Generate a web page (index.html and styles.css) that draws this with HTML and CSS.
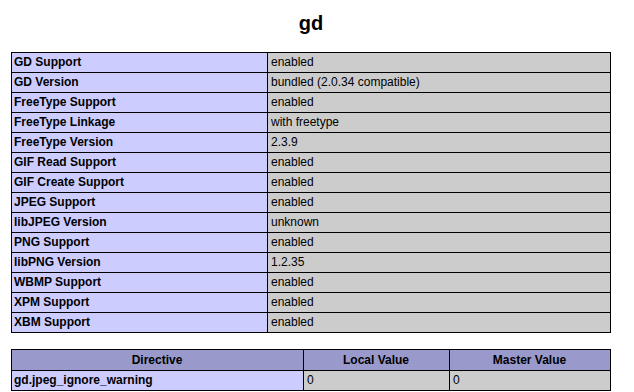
FILE: index.html
```html
<!DOCTYPE html>
<html lang="en">
<head>
    <meta charset="UTF-8">
    <meta name="viewport" content="width=device-width, initial-scale=1.0">
    <title>gd</title>
    <link rel="stylesheet" href="styles.css">
</head>
<body>
    <div class="center">
        <h2>gd</h2>
        <table class="info">
            <tr><td class="e">GD Support</td><td class="v">enabled</td></tr>
            <tr><td class="e">GD Version</td><td class="v">bundled (2.0.34 compatible)</td></tr>
            <tr><td class="e">FreeType Support</td><td class="v">enabled</td></tr>
            <tr><td class="e">FreeType Linkage</td><td class="v">with freetype</td></tr>
            <tr><td class="e">FreeType Version</td><td class="v">2.3.9</td></tr>
            <tr><td class="e">GIF Read Support</td><td class="v">enabled</td></tr>
            <tr><td class="e">GIF Create Support</td><td class="v">enabled</td></tr>
            <tr><td class="e">JPEG Support</td><td class="v">enabled</td></tr>
            <tr><td class="e">libJPEG Version</td><td class="v">unknown</td></tr>
            <tr><td class="e">PNG Support</td><td class="v">enabled</td></tr>
            <tr><td class="e">libPNG Version</td><td class="v">1.2.35</td></tr>
            <tr><td class="e">WBMP Support</td><td class="v">enabled</td></tr>
            <tr><td class="e">XPM Support</td><td class="v">enabled</td></tr>
            <tr><td class="e">XBM Support</td><td class="v">enabled</td></tr>
        </table>
        <table class="directives">
            <tr class="h"><th class="col-name">Directive</th><th class="col-local">Local Value</th><th>Master Value</th></tr>
            <tr><td class="e">gd.jpeg_ignore_warning</td><td class="v">0</td><td class="v">0</td></tr>
        </table>
    </div>
</body>
</html>
```

FILE: styles.css
```css
body {
    margin: 0;
    background-color: #fff;
    color: #000;
    font-family: "Liberation Sans", Arial, Helvetica, sans-serif;
}
.center {
    width: 622px;
    text-align: center;
}
h2 {
    font-size: 20px;
    line-height: 24px;
    margin: 11px 0 17px;
}
table {
    width: 600px;
    margin: 0 auto;
    border-collapse: collapse;
    text-align: left;
}
td, th {
    border: 1px solid #000;
    font-size: 12px;
    line-height: 15px;
    padding: 2px 3px 2px 2px;
    vertical-align: middle;
}
.info .e {
    width: 250px;
}
.directives {
    margin-top: 16px;
}
.directives .col-name {
    width: 286px;
}
.directives .col-local {
    width: 140px;
}
.e {
    background-color: #ccccff;
    font-weight: bold;
}
.v {
    background-color: #cccccc;
    padding-left: 3px;
}
.h th {
    background-color: #9999cc;
    font-weight: bold;
    text-align: center;
    padding-top: 3px;
}
```
